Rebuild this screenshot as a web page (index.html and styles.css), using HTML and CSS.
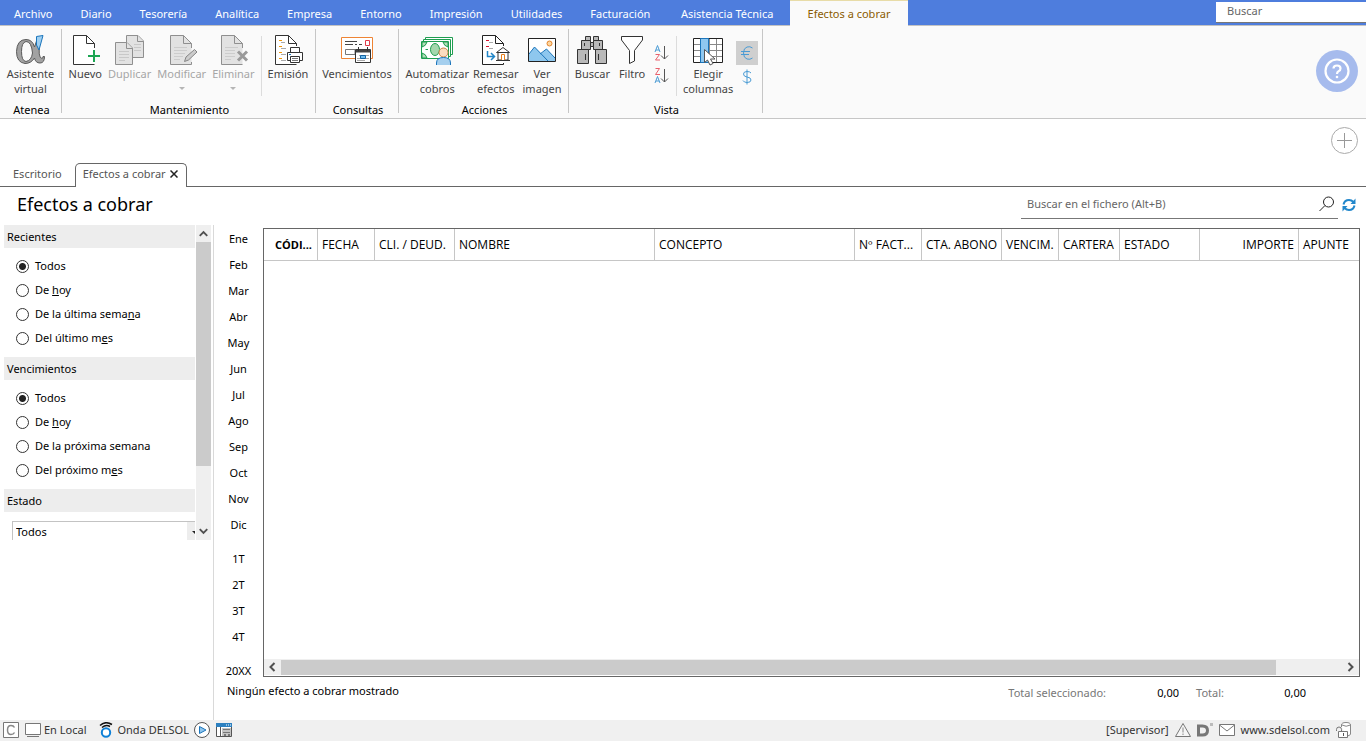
FILE: index.html
```html
<!DOCTYPE html>
<html lang="es">
<head>
<meta charset="utf-8">
<title>Efectos a cobrar</title>
<link rel="stylesheet" href="styles.css">
</head>
<body>
<header class="menubar">
  <nav class="menu">
    <button>Archivo</button><button>Diario</button><button>Tesorería</button><button>Analítica</button><button>Empresa</button><button>Entorno</button><button>Impresión</button><button>Utilidades</button><button>Facturación</button><button class="wide">Asistencia Técnica</button><button class="wide current">Efectos a cobrar</button>
  </nav>
  <input class="global-search" type="text" placeholder="Buscar" aria-label="Buscar">
</header>

<section class="ribbon">
  <div class="group g-atenea">
    <div class="tools">
      <button class="tool">
        <svg viewBox="0 0 32 32"><path d="M25 7Q22.500 24 27 24.500Q28 24.500 28 22.500H29.500Q29.500 29 25 29Q20.500 29 19.500 24Q16 29.500 10 29.500Q1.500 28.500 1.500 17.500Q2 5.500 11 5.500Q17.500 5.500 19.500 13L21.500 7ZM11 7.500Q6.500 8.500 6.500 17.500Q6.500 27 11 27.500Q16.500 26.500 17.500 19Q16.500 7.500 11 7.500Z" fill="#a2a2a2" fill-rule="evenodd" stroke="#5a5a5a"/><path d="M21.500 2.500L28 1.500L24 16L21.500 11Z" fill="#9fd0f2" stroke="#1b75bb"/></svg>
        <span>Asistente<br>virtual</span></button>
    </div>
    <h2>Atenea</h2>
  </div>
  <div class="group g-mant">
    <div class="tools">
      <button class="tool">
        <svg viewBox="0 0 32 32"><path d="M25.500 14V9.500L17.500 1.500H4.500V30.500H25.500" fill="#fff" stroke="#333"/><path d="M17.500 1.500V9.500H25.500" fill="none" stroke="#333"/><path d="M25 16V28M19 22H31" stroke="#1ca552" stroke-width="2"/></svg>
        <span>Nuevo</span></button>
      <button class="tool" disabled>
        <svg viewBox="0 0 32 32"><g fill="#e2e2e2" stroke="#8f8f8f"><path d="M12.500 1.500H24L29.500 7V23.500H12.500Z"/><path d="M23.500 1.500V7.500H29.500"/><path d="M1.500 8.500H13L18.500 14V30.500H1.500Z"/><path d="M12.500 8.500V14.500H18.500"/></g><path d="M5 17.500H15M5 20.500H15M5 23.500H15M5 26.500H11M20 10.500H27M20 13.500H27M20 16.500H27" stroke="#c8c8c8"/></svg>
        <span>Duplicar</span></button>
      <button class="tool" disabled>
        <svg viewBox="0 0 32 32"><path d="M25.500 14V9.500L17.500 1.500H4.500V30.500H25.500V28" fill="#e2e2e2" stroke="#8f8f8f"/><path d="M17.500 1.500V9.500H25.500" fill="none" stroke="#8f8f8f"/><path d="M8 13.500H21M8 16.500H21M8 19.500H19M8 22.500H17M8 25.500H14" stroke="#ccc"/><path d="M18.500 27.500L20 23L28.500 15.500L31 18L22.500 26Z" fill="#ccc" stroke="#858585"/></svg>
        <span>Modificar</span><i class="caret"></i></button>
      <button class="tool" disabled>
        <svg viewBox="0 0 32 32"><path d="M25.500 14V9.500L17.500 1.500H4.500V30.500H25.500" fill="#e2e2e2" stroke="#8f8f8f"/><path d="M17.500 1.500V9.500H25.500" fill="none" stroke="#8f8f8f"/><path d="M8 13.500H21M8 16.500H18M8 19.500H18M8 22.500H18M8 25.500H14" stroke="#ccc"/><path d="M21 17.500L30 26.500M30 17.500L21 26.500" stroke="#999" stroke-width="3"/></svg>
        <span>Eliminar</span><i class="caret"></i></button>
      <span class="divider"></span>
      <button class="tool">
        <svg viewBox="0 0 32 32"><path d="M24.500 12V9.500L16.500 1.500H3.500V30.500H24.500" fill="#fff" stroke="#333"/><path d="M16.500 1.500V9.500H24.500" fill="none" stroke="#333"/><path d="M7 6.500H10M7 12.500H10M7 18.500H10M7 24.500H10" stroke="#f0980f"/><path d="M9 8.500H13M9 14.500H14M9 20.500H14M9 26.500H14" stroke="#aaa"/><g fill="#fff" stroke="#333"><path d="M18.500 18V13.500H27.500V18"/><path d="M15.500 18.500H30.500V26.500H15.500Z"/><path d="M18.500 22.500H27.500V28.500H18.500Z"/></g><path d="M20 24.500H26M20 26.500H26" stroke="#777"/><path d="M17 20.500H19" stroke="#1b75bb"/></svg>
        <span>Emisión</span></button>
    </div>
    <h2>Mantenimiento</h2>
  </div>
  <div class="group g-cons">
    <div class="tools">
      <button class="tool">
        <svg viewBox="0 0 32 32"><path d="M.500 3.500H31.500V24.500H.500Z" fill="#fff" stroke="#ee8434"/><path d="M4 7.500H16M4 10.500H12M14 10.500H16M18 10.500H21" stroke="#444"/><path d="M24.500 6.500H28.500V11.500H24.500Z" fill="none" stroke="#e03a48"/><path d="M4.500 15.500H14V20.500H4.500Z" fill="none" stroke="#777"/><path d="M14.500 15.500H29.500V28.500H14.500Z" fill="#fff" stroke="#333"/><path d="M15 17H29" stroke="#444" stroke-width="3"/><path d="M17.500 13V17M26.500 13V17" stroke="#333"/><path d="M18 21.500H28M16 24.500H28M16 26.500H24" stroke="#aaa"/><path d="M19.500 21.500H24.500V24.500H19.500Z" fill="#6dbbec" stroke="#1262a3"/></svg>
        <span>Vencimientos</span></button>
    </div>
    <h2>Consultas</h2>
  </div>
  <div class="group g-acc">
    <div class="tools">
      <button class="tool">
        <svg viewBox="0 0 32 32"><g fill="#fff" stroke="#1f9d50"><path d="M4.500 3.500H31.500V20.500H4.500Z"/><path d="M2.500 5.500H29.500V22.500H2.500Z"/><path d="M.500 7.500H27.500V24.500H.500Z"/></g><path d="M1 8H6Q5 12 1 13ZM27 8H22Q23 12 27 13ZM1 24H6Q5 20 1 19Z" fill="#b4ddb9" stroke="#1f9d50"/><ellipse cx="14" cy="15.500" rx="4.500" ry="6" fill="#a4d7ad" stroke="#1f9d50"/><path d="M4.500 15.500H7M21 15.500H23" stroke="#1f9d50"/><circle cx="22.500" cy="18.500" r="4.500" fill="#fbdcc0" stroke="#c98245"/><path d="M15.500 31V29Q15.500 23.500 22.500 23.500T29.500 29V31" fill="#a5cfee" stroke="#1b75bb"/></svg>
        <span>Automatizar<br>cobros</span></button>
      <button class="tool">
        <svg viewBox="0 0 32 32"><path d="M23.500 12V9.500L15.500 1.500H2.500V30.500H23.500V29" fill="#fff" stroke="#222"/><path d="M15.500 1.500V9.500H23.500" fill="none" stroke="#222"/><path d="M6 6.500H9M6 12.500H9" stroke="#d8142d"/><path d="M9 8.500H13M9 14.500H13" stroke="#aaa"/><path d="M7.500 17V22.500H14M11 19L14.500 22.500L11 26" fill="none" stroke="#2085c7" stroke-width="1.500"/><path d="M18 19V26H28V19" fill="#fff" stroke="#333"/><path d="M16.500 18.500L23 13.500L29.500 18.500Z" fill="#fff" stroke="#333"/><path d="M21.500 26V20.500H24.500V26" fill="#fff" stroke="#e8801c"/><path d="M16 26.500H30" stroke="#333"/></svg>
        <span>Remesar<br>efectos</span></button>
      <button class="tool">
        <svg viewBox="0 0 32 32"><path d="M2.500 4.500H29.500V27.500H2.500Z" fill="#fff"/><path d="M3 20L8.500 13L15 19.500L20.500 15L29 24V27H3Z" fill="#8ec7ee"/><path d="M3 20L8.500 13L22 27M14 20L20.500 15L29 24" fill="none" stroke="#1b75bb"/><circle cx="23.500" cy="9.500" r="2.500" fill="#fcd6a0" stroke="#e5842a"/><path d="M2.500 4.500H29.500V27.500H2.500Z" fill="none" stroke="#222"/></svg>
        <span>Ver<br>imagen</span></button>
    </div>
    <h2>Acciones</h2>
  </div>
  <div class="group g-vista">
    <div class="tools">
      <button class="tool">
        <svg viewBox="0 0 32 32"><g fill="#b9b9b9" stroke="#333"><path d="M9.500 2.500H14.500V6.500H9.500ZM17.500 2.500H22.500V6.500H17.500Z"/><path d="M5.500 6.500H14.500V15.500H5.500ZM17.500 6.500H26.500V15.500H17.500Z"/><path d="M14.500 8.500H17.500V12.500H14.500Z"/><path d="M1.500 15.500H12.500V29.500H1.500ZM19.500 15.500H30.500V29.500H19.500Z"/></g><path d="M8.500 9V12M23.500 9V12M9.500 20V26M22.500 20V26" stroke="#333"/></svg>
        <span>Buscar</span></button>
      <button class="tool">
        <svg viewBox="0 0 32 32"><path d="M5.500 2.500H26.500V6L18.500 16.500V27L13.500 29.500V16.500L5.500 6Z" fill="#fff" stroke="#333"/></svg>
        <span>Filtro</span></button>
      <div class="mini">
        <button aria-label="Orden ascendente"><svg viewBox="0 0 16 16"><path d="M1 7L3.500.500L6 7M2 5H5" fill="none" stroke="#4a9bd4"/><path d="M1.500 9.500H5.500L1.500 15H6" fill="none" stroke="#e8606c"/><path d="M10.500 1V14M7 10.500L10.500 14L14 10.500" fill="none" stroke="#555"/></svg></button>
        <button aria-label="Orden descendente"><svg viewBox="0 0 16 16"><path d="M1.500.500H5.500L1.500 6.500H6" fill="none" stroke="#e8606c"/><path d="M1 15L3.500 8.500L6 15M2 13H5" fill="none" stroke="#4a9bd4"/><path d="M10.500 1V14M7 10.500L10.500 14L14 10.500" fill="none" stroke="#555"/></svg></button>
      </div>
      <span class="divider"></span>
      <button class="tool">
        <svg viewBox="0 0 32 32"><path d="M1.500 4.500H30.500V28.500H1.500Z" fill="#fff"/><path d="M2 10.500H30M2 16.500H30M2 22.500H30M17.500 5V28M24.500 5V28" stroke="#888"/><path d="M1.500 4.500H30.500V28.500H1.500Z" fill="none" stroke="#222"/><path d="M8.500 4.500H16.500V28.500H8.500Z" fill="#90c8f0" stroke="#1b75bb"/><path d="M12.500 15.500V28.500L15.500 26L18 31L21 29.500L18.500 25H23Z" fill="#fff" stroke="#555"/></svg>
        <span>Elegir<br>columnas</span></button>
      <div class="mini currency">
        <button class="on" aria-label="Euros"><svg viewBox="0 0 16 16"><path d="M13.500 3Q11 1 8 2Q4.500 3 4.500 8T8 14Q11 15 13.500 13M2 6.500H11M2 9.500H10" fill="none" stroke="#4a9bd4"/></svg></button>
        <button aria-label="Dólares"><svg viewBox="0 0 16 16"><path d="M12 4Q11 2.500 8 2.500Q4.500 2.500 4.500 5T8 8Q12 8.500 12 11T8 13.500Q5 13.500 4 11.500M8 .500V15.500" fill="none" stroke="#4a9bd4"/></svg></button>
      </div>
    </div>
    <h2>Vista</h2>
  </div>
  <button class="help" aria-label="Ayuda"><svg viewBox="0 0 42 42"><circle cx="21" cy="21" r="21" fill="#a6bbed"/><circle cx="21" cy="21" r="11.500" fill="none" stroke="#fff" stroke-width="2.200"/><path d="M17.500 18.500Q17.500 15.500 21 15.500T24.500 18.500Q24.500 20.500 22.500 21.300Q21 22 21 24" fill="none" stroke="#fff" stroke-width="2.200"/><circle cx="21" cy="27" r="1.300" fill="#fff"/></svg></button>
</section>

<nav class="docs">
  <button class="doc">Escritorio</button>
  <button class="doc open">Efectos a cobrar <svg viewBox="0 0 8 8"><path d="M.500.500L7.500 7.500M7.500.500L.500 7.500" stroke="#222" stroke-width="1.500"/></svg></button>
  <button class="add" aria-label="Añadir"><svg viewBox="0 0 28 28"><circle cx="14.500" cy="14.500" r="13" fill="none" stroke="#aaa"/><path d="M14.500 7V22M7 14.500H22" stroke="#999"/></svg></button>
</nav>

<div class="heading">
  <h1>Efectos a cobrar</h1>
  <div class="file-search">
    <input type="text" placeholder="Buscar en el fichero (Alt+B)" aria-label="Buscar en el fichero">
    <svg viewBox="0 0 16 16"><circle cx="9.500" cy="6" r="5" fill="none" stroke="#222"/><path d="M6 9.500L.500 15" stroke="#222"/></svg>
  </div>
  <button class="refresh" aria-label="Actualizar"><svg viewBox="0 0 14 14"><path d="M1.500 6.500Q2.500 2 7 2Q9.500 2 11.500 4M12.500 7.500Q11.500 12 7 12Q4.500 12 2.500 10" fill="none" stroke="#2287cb" stroke-width="2"/><path d="M13.500 .500V6H8.500ZM.500 13.500V8H5.500Z" fill="#2287cb"/></svg></button>
</div>

<main class="work">
  <aside class="side">
    <div class="filters">
      <div class="filter-list">
        <fieldset>
          <legend>Recientes</legend>
          <label><input type="radio" name="rec" checked>Todos</label>
          <label><input type="radio" name="rec"><span>De <u>h</u>oy</span></label>
          <label><input type="radio" name="rec"><span>De la última sema<u>n</u>a</span></label>
          <label><input type="radio" name="rec"><span>Del último m<u>e</u>s</span></label>
        </fieldset>
        <fieldset>
          <legend>Vencimientos</legend>
          <label><input type="radio" name="ven" checked>Todos</label>
          <label><input type="radio" name="ven"><span>De <u>h</u>oy</span></label>
          <label><input type="radio" name="ven">De la próxima semana</label>
          <label><input type="radio" name="ven"><span>Del próximo m<u>e</u>s</span></label>
        </fieldset>
        <fieldset>
          <legend>Estado</legend>
          <div class="combo"><select aria-label="Estado"><option>Todos</option></select><svg viewBox="0 0 8 20"><path d="M5 9H11L8 12Z" fill="#222"/></svg></div>
        </fieldset>
      </div>
      <div class="vbar">
        <svg viewBox="0 0 16 16"><path d="M4 10.500L8 6.500L12 10.500" fill="none" stroke="#505050" stroke-width="2"/></svg>
        <div class="thumb"></div>
        <svg viewBox="0 0 16 16"><path d="M4 5.500L8 9.500L12 5.500" fill="none" stroke="#505050" stroke-width="2"/></svg>
      </div>
    </div>
  </aside>
  <section class="content">
    <div class="grid-area">
      <div class="periods">
        <div><button>Ene</button><button>Feb</button><button>Mar</button><button>Abr</button><button>May</button><button>Jun</button><button>Jul</button><button>Ago</button><button>Sep</button><button>Oct</button><button>Nov</button><button>Dic</button></div>
        <div><button>1T</button><button>2T</button><button>3T</button><button>4T</button></div>
        <div><button>20XX</button></div>
      </div>
      <div class="sheet">
        <table>
          <colgroup><col class="c54"><col class="c57"><col class="c80"><col class="c200"><col class="c200"><col class="c67"><col class="c80"><col class="c57"><col class="c61"><col class="c80"><col class="c99"><col class="c60"></colgroup>
          <thead><tr><th class="key">CÓDI...</th><th>FECHA</th><th>CLI. / DEUD.</th><th>NOMBRE</th><th>CONCEPTO</th><th>Nº FACT...</th><th>CTA. ABONO</th><th>VENCIM.</th><th>CARTERA</th><th>ESTADO</th><th class="num">IMPORTE</th><th>APUNTE</th></tr></thead>
        </table>
        <div class="hbar">
          <svg viewBox="0 0 16 16"><path d="M10.500 4L6.500 8L10.500 12" fill="none" stroke="#505050" stroke-width="2"/></svg>
          <div class="track"><div class="thumb"></div></div>
          <svg viewBox="0 0 16 16"><path d="M5.500 4L9.500 8L5.500 12" fill="none" stroke="#505050" stroke-width="2"/></svg>
        </div>
      </div>
    </div>
    <div class="totals">
      <p>Ningún efecto a cobrar mostrado</p>
      <dl><dt>Total seleccionado:</dt><dd>0,00</dd><dt>Total:</dt><dd>0,00</dd></dl>
    </div>
  </section>
</main>

<footer class="status">
  <svg viewBox="0 0 16 16"><path d="M.500.500H15.500V15.500H.500Z" fill="#fff" stroke="#777"/><path d="M11.500 5.500Q10.500 3.500 8 3.500Q4.500 3.500 4.500 8T8 12.500Q10.500 12.500 11.500 10.500" fill="none" stroke="#888" stroke-width="1.500"/></svg>
  <svg class="s-pc" viewBox="0 0 16 16"><path d="M.500 1.500H15.500V12.500H.500Z" fill="#fff" stroke="#777"/><path d="M2 14.500H14" stroke="#777"/></svg>
  <span class="s-local">En Local</span>
  <svg viewBox="0 0 16 16"><circle cx="8" cy="10.500" r="4.200" fill="#fff" stroke="#0f80d7" stroke-width="2"/><path d="M2 3.500Q7-1.500 14 2.500M4 5.500Q8 2 12 4.500" fill="none" stroke="#111" stroke-width="1.500"/></svg>
  <span class="s-onda">Onda DELSOL</span>
  <svg class="s-play" viewBox="0 0 16 16"><circle cx="8" cy="8" r="7.500" fill="#fff" stroke="#555"/><path d="M5.500 4.500L12 8L5.500 11.500Z" fill="#8ec5ee" stroke="#1b75bb"/></svg>
  <svg viewBox="0 0 16 16"><path d="M.500 1.500H15.500V14.500H.500Z" fill="#fff" stroke="#555"/><path d="M0 1H16V5H0Z" fill="#2c80c0"/><path d="M10 3H11M12 3H13M14 3H15" stroke="#fff"/><path d="M4.500 5V15" stroke="#555"/><path d="M6 6H15V14H6Z" fill="#c4c4c4"/><path d="M7 7.500H14M7 10.500H14" stroke="#777"/><path d="M8 12H10V14H8ZM12 12H14V14H12Z" fill="#777"/></svg>
  <span class="s-user">[Supervisor]</span>
  <svg viewBox="0 0 16 16"><path d="M8 1.500L15.500 14.500H.500Z" fill="#f6f6f6" stroke="#777"/><path d="M8 5.500V10.500M8 11.500V13" stroke="#888"/></svg>
  <svg class="s-d" viewBox="0 0 16 16"><path d="M1.500 4H5.500Q10.500 4 10.500 8.500T5.500 13H1.500Z" fill="none" stroke="#777" stroke-width="3"/><path d="M13 1H16V4H13Z" fill="#bbb"/></svg>
  <svg class="s-mail" viewBox="0 0 16 16"><path d="M.500 2.500H15.500V13.500H.500Z" fill="#fff" stroke="#777"/><path d="M.500 3L8 9L15.500 3" fill="none" stroke="#777"/></svg>
  <a href="#">www.sdelsol.com</a>
  <svg class="s-lock" viewBox="0 0 16 16"><path d="M5.500 5V3Q5.500.500 10 .500T14.500 3V12Q14.500 13.500 11 14" fill="#fff" stroke="#888"/><path d="M6 3Q10 5.500 14.500 3" fill="none" stroke="#888"/><path d="M2.500 9.500H11.500V15.500H2.500Z" fill="#fff" stroke="#777"/><path d="M.500 9V7.500Q.500 5 3 5T5.500 7.500V9.500" fill="none" stroke="#777"/><path d="M7.500 11V14" stroke="#555"/></svg>
</footer>
</body>
</html>
```

FILE: styles.css
```css
* { box-sizing: border-box; }
body {
  margin: 0;
  height: 100vh;
  display: flex;
  flex-direction: column;
  background: #fff;
  color: #000;
  font: 11px/16px "Noto Sans", "Open Sans", sans-serif;
}
button, input, select { font: inherit; color: inherit; }
button { border: 0; padding: 0; background: none; }
h1, h2, p, dl, dd, fieldset { margin: 0; padding: 0; border: 0; font-weight: 400; }
svg { display: block; flex: none; }

/* Menu */
.menubar {
  display: flex;
  justify-content: space-between;
  height: 26px;
  background: #4e7ddd;
  border-bottom: 1px solid #c3c3c3;
}
.menu { display: flex; width: 908px; }
.menu button { height: 25px; padding: 2px 14px 0; color: #fff; white-space: nowrap; }
.menu .wide { flex: 1 0 auto; }
.menu .current {
  height: 26px;
  padding: 0 15px;
  background: #fafafa;
  color: #8a5a00;
  border-top: 1px solid #e8dca8;
}
.global-search {
  width: 150px;
  height: 21px;
  margin-top: 2px;
  padding: 0 11px 3px;
  border: 0;
  border-bottom: 1px solid #777;
  background: #fff;
}
input::placeholder { color: #666; opacity: 1; }

/* Ribbon */
.ribbon {
  display: flex;
  height: 93px;
  padding: 3px 8px 5px 0;
  background: #fafafa;
  border-bottom: 1px solid #c6c6c6;
}
.group {
  display: flex;
  flex-direction: column;
  justify-content: space-between;
  border-right: 1px solid #c6c6c6;
}
.group h2 { height: 9px; padding-left: 2px; font-size: 11px; line-height: 12px; text-align: center; }
.g-atenea { width: 62px; }
.g-mant { width: 254px; }
.g-cons { width: 83px; }
.g-acc { width: 170px; }
.g-vista { width: 194px; }
.tools { display: flex; align-items: flex-start; justify-content: center; padding-top: 5px; }
.tool {
  display: flex;
  flex-direction: column;
  align-items: center;
  padding: 0 3px;
  line-height: 15px;
  color: #444;
}
.g-acc .tool { padding: 0 2px; }
.g-vista .tools { padding-right: 1px; }
.tool svg { width: 32px; height: 32px; }
.tool:disabled { color: #a6a6a6; }
.caret { margin-top: 6px; border: 3px solid transparent; border-top-color: #b5b5b5; }
.divider { width: 1px; height: 60px; margin: 2px 3px 0; background: #dcdcdc; }
.mini { display: flex; flex-direction: column; gap: 7px; padding: 11px 3px 0; }
.mini svg { width: 16px; height: 16px; }
.currency { gap: 0; padding: 7px 0 0; }
.currency button { padding: 4px 3px; }
.currency .on { background: #cfcfcf; }
.help { margin: 21px 0 0 auto; height: 42px; }
.help svg { width: 42px; height: 42px; }

/* Document tabs */
.docs {
  display: flex;
  align-items: flex-end;
  height: 68px;
  padding-right: 8px;
  border-bottom: 1px solid #666;
}
.doc { height: 24px; padding: 0 13px; color: #555; }
.doc.open {
  display: flex;
  align-items: center;
  gap: 4px;
  margin-bottom: -1px;
  padding: 0 8px 3px 7px;
  background: #fff;
  border: 1px solid #666;
  border-bottom: 0;
  border-radius: 5px 5px 0 0;
}
.doc svg { width: 8px; height: 8px; }
.add { align-self: flex-start; margin: 7px 0 0 auto; }
.add svg { width: 28px; height: 28px; }

/* Heading */
.heading { display: flex; height: 38px; padding: 0 10px 0 17px; }
h1 { flex: 1; font-size: 18px; line-height: 34px; }
.file-search {
  display: flex;
  align-items: center;
  width: 317px;
  height: 32px;
  padding: 3px 3px 0 6px;
  border-bottom: 1px solid #777;
}
.file-search input { flex: 1; border: 0; padding: 0; background: none; }
.file-search svg { width: 16px; height: 16px; }
.refresh { height: 36px; margin-left: 4px; }
.refresh svg { width: 14px; height: 14px; }

/* Work area */
.work { flex: 1; display: flex; min-height: 0; }
.side { width: 214px; padding-left: 4px; border-right: 1px solid #d9d9d9; }
.filters { display: flex; gap: 1px; height: 315px; }
.filter-list { width: 191px; overflow: hidden; }
fieldset { min-width: 0; padding-bottom: 7px; }
legend { display: block; width: 100%; height: 23px; margin-bottom: 6px; padding: 0 3px; line-height: 23px; background: #ededed; }
label { display: flex; align-items: center; gap: 6px; height: 24px; padding-left: 12px; }
input[type="radio"] {
  appearance: none;
  width: 13px;
  height: 13px;
  margin: 0;
  border: 1px solid #333;
  border-radius: 50%;
  background: #fff;
}
input[type="radio"]:checked { background: radial-gradient(circle, #222 0 3px, #fff 4px); }
.combo { display: flex; align-items: center; margin: 3px 0 0 8px; height: 22px; border: 1px solid #c3c3c3; border-right: 0; }
.combo select { flex: 1; appearance: none; height: 20px; padding: 0 3px; border: 0; background: #fff; }
.combo svg { width: 8px; height: 20px; background: #ededed; }
.vbar { display: flex; flex-direction: column; justify-content: space-between; width: 15px; background: #efefef; }
.vbar svg { width: 15px; height: 17px; }
.vbar .thumb { height: 224px; margin-bottom: auto; background: #cbcbcb; }

.content { flex: 1; min-width: 0; display: flex; flex-direction: column; }
.grid-area { flex: 1; display: flex; padding: 3px 6px 0 0; }
.periods { display: flex; flex-direction: column; gap: 8px; width: 49px; margin: -2px 0 -10px; }
.periods button { display: block; width: 100%; height: 26px; }
.sheet { flex: 1; display: flex; flex-direction: column; justify-content: space-between; min-width: 0; border: 1px solid #666; }
table { width: 100%; table-layout: fixed; border-collapse: separate; border-spacing: 0; }
.c54 { width: 54px; } .c57 { width: 57px; } .c60 { width: 60px; } .c61 { width: 61px; }
.c67 { width: 67px; } .c80 { width: 80px; } .c99 { width: 99px; } .c200 { width: 200px; }
th {
  height: 32px;
  padding: 0 0 0 4px;
  white-space: nowrap;
  text-align: left;
  font: 400 12px/16px "Open Sans", "Noto Sans", sans-serif;
  border-right: 1px solid #c6c6c6;
  border-bottom: 1px solid #c6c6c6;
}
th:last-child { border-right: 0; }
.key { padding-left: 11px; font-size: 11px; font-weight: 700; }
.num { padding-right: 4px; text-align: right; }
.hbar { display: flex; align-items: center; height: 17px; border-bottom: 1px solid #fff; background: #efefef; }
.hbar svg { width: 16px; height: 16px; }
.track { flex: 1; padding: 1px 0 0 1px; }
.hbar .thumb { width: 93.7%; height: 15px; background: #cbcbcb; }
.totals { display: flex; justify-content: space-between; height: 43px; padding: 6px 60px 0 13px; }
.totals dl { display: flex; padding-top: 2px; }
.totals dt { color: #777; }
.totals dd { width: 90px; padding-right: 17px; text-align: right; }
.totals dd:last-child { width: 82px; padding-right: 0; }

/* Status bar */
.status { display: flex; align-items: center; height: 21px; padding: 0 14px 1px 3px; background: #f0f0f0; color: #333; }
.status svg { width: 16px; height: 16px; }
.s-pc { margin-left: 6px; }
.s-local { margin: 0 12px 0 3px; }
.s-onda { margin-left: 3px; }
.status .s-play { margin: 0 6px 0 5px; }
.s-user { margin: 0 6px 0 auto; }
.s-d { margin: 0 6px; }
.status a { margin: 0 6px; color: inherit; text-decoration: none; }
```
